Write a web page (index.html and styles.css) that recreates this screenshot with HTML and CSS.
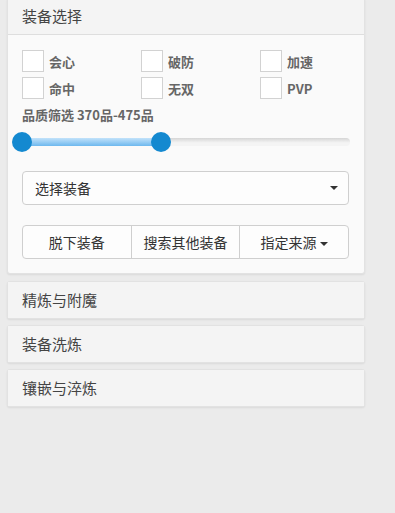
FILE: index.html
```html
<!DOCTYPE html>
<html lang="zh-CN">
<head>
    <meta charset="UTF-8">
    <meta name="viewport" content="width=device-width, initial-scale=1.0">
    <title>装备选择</title>
    <link rel="stylesheet" href="styles.css">
</head>
<body>
    <div class="container">
        <div class="panel first">
            <div class="panel-heading">装备选择</div>
            <div class="panel-body">
                <div class="checks">
                    <label class="check"><span class="box"></span>会心</label>
                    <label class="check"><span class="box"></span>破防</label>
                    <label class="check"><span class="box"></span>加速</label>
                    <label class="check"><span class="box"></span>命中</label>
                    <label class="check"><span class="box"></span>无双</label>
                    <label class="check"><span class="box"></span>PVP</label>
                </div>
                <div class="quality">品质筛选 370品-475品</div>
                <div class="slider">
                    <div class="track"></div>
                    <div class="range" style="left: 10px; width: 139px;"></div>
                    <span class="handle" style="left: 0px;"></span>
                    <span class="handle" style="left: 139px;"></span>
                </div>
                <div class="select">
                    <span>选择装备</span>
                    <span class="caret"></span>
                </div>
                <div class="btn-group">
                    <button class="btn">脱下装备</button>
                    <button class="btn">搜索其他装备</button>
                    <button class="btn">指定来源 <span class="caret"></span></button>
                </div>
            </div>
        </div>
        <div class="panel">
            <div class="panel-heading">精炼与附魔</div>
        </div>
        <div class="panel">
            <div class="panel-heading">装备洗炼</div>
        </div>
        <div class="panel">
            <div class="panel-heading">镶嵌与淬炼</div>
        </div>
    </div>
</body>
</html>
```

FILE: styles.css
```css
body {
    margin: 0;
    background: #ebebeb;
    font-family: "Noto Sans CJK SC", "Liberation Sans", sans-serif;
    color: #333;
}
.container {
    width: 358px;
    margin-left: 7px;
}
.panel {
    background: #fafafa;
    border: 1px solid #e2e2e2;
    border-radius: 3px;
    box-shadow: 0 1px 2px rgba(0, 0, 0, 0.08);
    margin-bottom: 6px;
}
.panel.first {
    margin-top: -3px;
    margin-bottom: 7px;
}
.panel-heading {
    background: #f4f4f4;
    padding: 0 14px;
    height: 36px;
    line-height: 36px;
    font-size: 15px;
    color: #444;
}
.first .panel-heading {
    border-bottom: 1px solid #dedede;
}
.panel-body {
    padding: 15px 15px 14px 14px;
}
.checks {
    display: grid;
    grid-template-columns: 119px 119px 90px;
    row-gap: 5px;
}
.check {
    display: flex;
    align-items: center;
    font-size: 13px;
    font-weight: bold;
    color: #666;
    height: 22px;
}
.box {
    width: 20px;
    height: 20px;
    border: 1px solid #d2d2d2;
    background: #fff;
    margin-right: 5px;
}
.quality {
    margin-top: 6px;
    font-size: 13px;
    font-weight: bold;
    color: #666;
    line-height: 20px;
}
.slider {
    position: relative;
    height: 20px;
    margin: 7px 0 0 -10px;
    width: 338px;
}
.track {
    position: absolute;
    left: 0;
    right: 0;
    top: 6px;
    height: 8px;
    border-radius: 4px;
    background: linear-gradient(#d5d5d5, #f4f4f4 60%);
}
.range {
    position: absolute;
    top: 6px;
    height: 8px;
    background: linear-gradient(#c2e2fa, #6db8ee);
}
.handle {
    position: absolute;
    top: 0;
    width: 20px;
    height: 20px;
    border-radius: 50%;
    background: #1489d0;
}
.select {
    margin-top: 19px;
    height: 32px;
    border: 1px solid #cfcfcf;
    border-radius: 4px;
    background: #fdfdfd;
    display: flex;
    align-items: center;
    justify-content: space-between;
    padding: 0 10px 0 12px;
    font-size: 14px;
}
.caret {
    display: inline-block;
    width: 0;
    height: 0;
    border-top: 4px solid #333;
    border-left: 4px solid transparent;
    border-right: 4px solid transparent;
    vertical-align: middle;
}
.btn-group {
    margin-top: 20px;
    display: flex;
}
.btn {
    flex: 1;
    height: 34px;
    border: 1px solid #cfcfcf;
    background: #fdfdfd;
    font-family: inherit;
    font-size: 14px;
    color: #333;
    padding: 0;
    margin-left: -1px;
}
.btn:first-child {
    margin-left: 0;
    border-radius: 4px 0 0 4px;
}
.btn:last-child {
    border-radius: 0 4px 4px 0;
}
```
